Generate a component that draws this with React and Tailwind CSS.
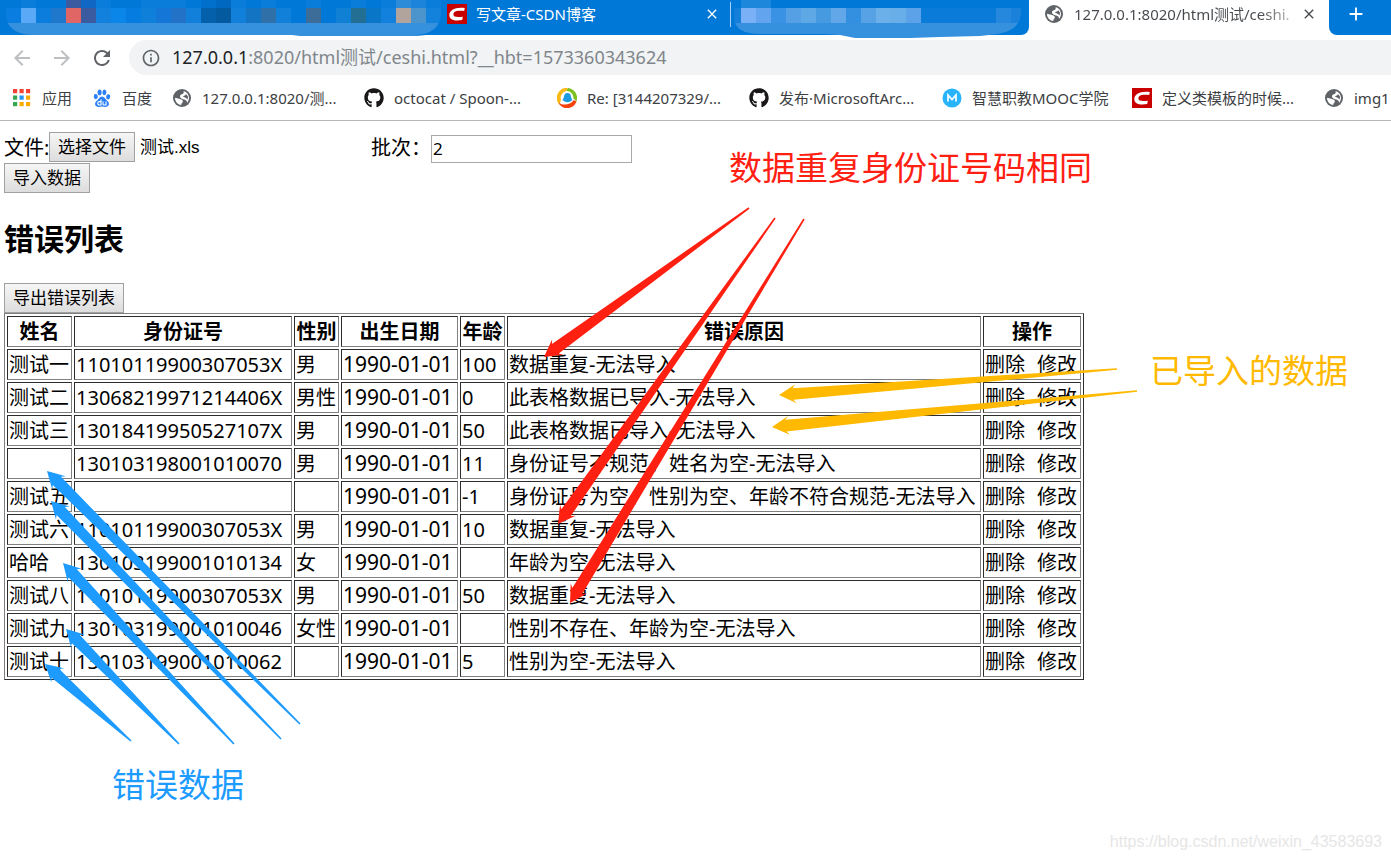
import { useState } from "react";
import { FaGithub } from "react-icons/fa";
import { MdAdd, MdArrowBack, MdArrowForward, MdClose, MdInfoOutline, MdRefresh } from "react-icons/md";

const rows = [
  { name: "测试一", id: "11010119900307053X", sex: "男", birth: "1990-01-01", age: "100", reason: "数据重复-无法导入" },
  { name: "测试二", id: "13068219971214406X", sex: "男性", birth: "1990-01-01", age: "0", reason: "此表格数据已导入-无法导入" },
  { name: "测试三", id: "13018419950527107X", sex: "男", birth: "1990-01-01", age: "50", reason: "此表格数据已导入-无法导入" },
  { name: "", id: "130103198001010070", sex: "男", birth: "1990-01-01", age: "11", reason: "身份证号不规范、姓名为空-无法导入" },
  { name: "测试五", id: "", sex: "", birth: "1990-01-01", age: "-1", reason: "身份证号为空、性别为空、年龄不符合规范-无法导入" },
  { name: "测试六", id: "11010119900307053X", sex: "男", birth: "1990-01-01", age: "10", reason: "数据重复-无法导入" },
  { name: "哈哈", id: "130103199001010134", sex: "女", birth: "1990-01-01", age: "", reason: "年龄为空-无法导入" },
  { name: "测试八", id: "11010119900307053X", sex: "男", birth: "1990-01-01", age: "50", reason: "数据重复-无法导入" },
  { name: "测试九", id: "130103199001010046", sex: "女性", birth: "1990-01-01", age: "", reason: "性别不存在、年龄为空-无法导入" },
  { name: "测试十", id: "130103199001010062", sex: "", birth: "1990-01-01", age: "5", reason: "性别为空-无法导入" },
];

const headers = ["姓名", "身份证号", "性别", "出生日期", "年龄", "错误原因", "操作"];

const leftTiles = [
  "#0a7de0", "#5aa9f7", "#0a7ddd", "#1f78cc", "#e06666", "#3a5ba0", "#1280dd", "#0a86e8", "#057ce0", "#0f80da",
  "#1477d8", "#2272c8", "#1080da", "#0560ac", "#045a9e", "#1080da", "#1474c4", "#3070a8", "#1080d8", "#0078d7",
  "#3c6c98", "#0078d7", "#1080d5", "#236f94", "#0a76c8", "#1280dd", "#b0a49c", "#4c94cc", "#1282dd",
];

const leftTopTiles = [
  "#0078d7", "#0a7cd9", "#0078d7", "#0078d7", "#3a5ba0", "#1068c4", "#0a7cd9", "#0078d7", "#0078d7", "#0a7cd9",
  "#0a7cd9", "#0a7cd9", "#0078d7", "#0070cc", "#0068c0", "#0a7cd9", "#0078d7", "#0a7cd9", "#0078d7", "#0078d7",
  "#0a7cd9", "#0078d7", "#0078d7", "#0a7cd9", "#0078d7", "#0a7cd9", "#2c8cd8", "#1c84da", "#0a7cd9",
];

const rightTiles = [
  "#7ab0f5", "#62a4ee", "#3a92e4", "#55a0e4", "#5ea8e6", "#469be0", "#62a8e8", "#338fe0", "#56a2e4", "#6cb0ea",
  "#68aee8", "#5ba2e8", "#0a7bd8", "#0a7bd8", "#0a7bd8", "#0a7bd8", "#0a7bd8", "#2588dc", "#1a82da",
];

function CsdnIcon() {
  return (
    <svg viewBox="0 0 20 20" className="size-5 shrink-0" aria-hidden="true">
      <rect width="20" height="20" fill="#c90000" />
      <path d="M17.8 4 17.2 7C14.6 6.5 11.8 6.6 9.6 7.1 7.6 7.6 6.4 9 6.4 10.5 6.5 12.9 9.6 13.4 15.8 12.7L15.2 16C8 17.2 2.4 16 2.3 11.2 2.2 6 8.4 2.8 17.8 4Z" fill="#fff" />
    </svg>
  );
}

function AppsIcon() {
  const colors = ["#f44336", "#f44336", "#f44336", "#34a853", "#2196f3", "#f9ab00", "#34a853", "#f9ab00", "#f9ab00"];
  return (
    <svg viewBox="0 0 20 20" className="size-5 shrink-0" aria-hidden="true">
      {colors.map((color, i) => (
        <rect key={i} x={1 + (i % 3) * 6.5} y={1 + Math.floor(i / 3) * 6.5} width="4.2" height="4.2" fill={color} />
      ))}
    </svg>
  );
}

function BaiduIcon() {
  return (
    <svg viewBox="0 0 20 20" className="size-5 shrink-0" aria-hidden="true">
      <g fill="#2b80f7">
        <ellipse cx="3.8" cy="8.6" rx="2" ry="2.6" transform="rotate(-8 3.8 8.6)" />
        <ellipse cx="7.6" cy="4.4" rx="2" ry="2.8" />
        <ellipse cx="12.4" cy="4.4" rx="2" ry="2.8" transform="rotate(10 12.4 4.4)" />
        <ellipse cx="16.2" cy="8.8" rx="2" ry="2.6" transform="rotate(8 16.2 8.8)" />
        <path d="M10 8.6C12.4 8.6 13 11 14.6 12.3 16.4 13.7 17.2 15 16.8 16.8 16.2 19 14 19.2 10 18.6 6 19.2 3.8 19 3.2 16.8 2.8 15 3.6 13.7 5.4 12.3 7 11 7.6 8.6 10 8.6Z" />
      </g>
      <path d="M9 11.6V17H7.4A1.5 1.5 0 0 1 7.4 13.6H9M11 13.6V16Q11 17 12 17H14V13.6" fill="none" stroke="#fff" strokeWidth="1.1" />
    </svg>
  );
}

function MailIcon() {
  return (
    <svg viewBox="0 0 20 20" className="size-5 shrink-0" aria-hidden="true">
      <path d="M11 0A10 10 0 0 1 19.6 13L16.3 10.5A6.5 6.5 0 0 0 9 3Z" fill="#7cc01e" />
      <path d="M2.4 16.6A10 10 0 0 1 11 0L8.6 3.2A7 7 0 0 0 4 12Z" fill="#fbb918" />
      <path d="M19.6 13A10 10 0 0 1 2.4 16.6L2 14.4C6 18 13 17 16.6 12.2Z" fill="#f4420c" />
      <path d="M10.5 5C8 5 7 6.8 7 9L5.6 12C5.6 13 6.2 13 6.8 12.6 7.4 14.8 13.6 14.8 14.2 12.6 14.8 13 15.4 13 15.2 12L14 9C14 6.8 13 5 10.5 5Z" fill="#1d9be0" />
    </svg>
  );
}

function MoocIcon() {
  return (
    <svg viewBox="0 0 20 20" className="size-5 shrink-0" aria-hidden="true">
      <circle cx="10" cy="10" r="9.5" fill="#27b4fb" />
      <path d="M6 13.5V7L10 11.5 14 7V13.5" fill="none" stroke="#fff" strokeWidth="1.7" />
    </svg>
  );
}

function Globe() {
  return (
    <svg viewBox="0 0 20 20" className="size-5 shrink-0" aria-hidden="true">
      <circle cx="10" cy="10" r="9" fill="#5f6368" />
      <path d="M11.6 3.2C14.8 3.8 17 6.6 17 10 17 11.9 16.3 13.5 15.1 14.7 14.8 13 14 11.9 12.4 11.5 10.4 11 8 10.4 8 8.4 8 6.7 9.4 6.3 10.6 6 11.6 5.6 11.8 4.4 11.6 3.2Z" fill="#fff" />
      <path d="M3 9.8 7 10.8C9.4 11.3 11 12 10.8 13.6 10.6 15.1 9.3 15.2 9.2 17 5.6 16.6 3 13.6 3 9.8Z" fill="#fff" />
      <path d="M10.6 8.2C12 7.6 13.6 7.6 14.2 6.2L16 8.4 15.6 11.4C14.4 9.8 12.6 9.4 10.6 8.2Z" fill="#5f6368" />
    </svg>
  );
}

function Bookmark({ icon, label, className }) {
  return (
    <a href="#" className={`flex shrink-0 items-center gap-[10px] whitespace-nowrap ${className}`}>
      {icon}
      <span>{label}</span>
    </a>
  );
}

function Tiles({ colors, x, y, height }) {
  return colors.map((color, i) => <rect key={i} x={x + i * 15} y={y} width="15" height={height} fill={color} />);
}

function LeftTabs() {
  return (
    <svg viewBox="0 0 447 37" className="h-[37px] w-[447px] shrink-0" aria-hidden="true">
      <clipPath id="left-tabs">
        <path d="M6 0H441V12Q441 34 415 35H34Q10 35 6 18Z" />
      </clipPath>
      <g clipPath="url(#left-tabs)">
        <Tiles colors={leftTopTiles} x={6} y={0} height={8} />
        <Tiles colors={leftTiles} x={6} y={8} height={15} />
        <rect x="6" y="23" width="435" height="12" fill="#3590de" />
      </g>
      <path d="M292 35H426L418 36H300Z" fill="#3590de" />
    </svg>
  );
}

function RightTabs() {
  return (
    <svg viewBox="0 0 291 38" className="h-[38px] w-[291px] shrink-0" aria-hidden="true">
      <clipPath id="right-tabs">
        <path d="M5 0H291V12Q291 30 268 34L250 36 210 37 180 38H125L110 35 95 34H30Q5 34 4 18Z" />
      </clipPath>
      <path d="M0.5 2V27" stroke="#a9d0f2" />
      <g clipPath="url(#right-tabs)">
        <rect x="11" width="30" height="8" fill="#1d87dc" />
        <rect x="4" y="8" width="7" height="15" fill="#1480da" />
        <Tiles colors={rightTiles} x={11} y={8} height={15} />
        <rect y="23" width="291" height="15" fill="#3590de" />
      </g>
    </svg>
  );
}

function TabStrip() {
  return (
    <div className="flex h-[35px] items-start bg-[#0078d7] text-[15px] leading-7">
      <LeftTabs />
      <div className="flex w-[283px] shrink-0 items-center text-white">
        <CsdnIcon />
        <span className="ml-[9px] grow whitespace-nowrap">写文章-CSDN博客</span>
        <button type="button" aria-label="关闭标签页" className="mr-[10px]">
          <MdClose className="size-4" />
        </button>
      </div>
      <RightTabs />
      <div className="h-[35px] shrink-0 bg-white">
        <div className="h-[35px] w-2 rounded-br-lg bg-[#0078d7]" />
      </div>
      <div className="h-[35px] w-[300px] shrink-0 bg-white text-[#45494d]">
        <div className="flex items-center pl-[15px]">
          <Globe />
          <span className="ml-[10px] w-[218px] bg-linear-to-r from-[#45494d] from-85% to-[#c8c8c8] bg-clip-text whitespace-nowrap text-transparent">
            127.0.0.1:8020/html测试/ceshi.
          </span>
          <button type="button" aria-label="关闭标签页" className="ml-[9px]">
            <MdClose className="size-4" />
          </button>
        </div>
      </div>
      <div className="h-[35px] grow bg-white">
        <div className="h-[35px] rounded-bl-lg bg-[#0078d7] pl-4 text-white">
          <button type="button" aria-label="新标签页" className="flex h-7 items-center">
            <MdAdd className="size-[22px]" />
          </button>
        </div>
      </div>
    </div>
  );
}

function Toolbar() {
  return (
    <div className="flex h-[45px] items-center text-[#5f6368]">
      <div className="flex w-[129px] shrink-0 items-center gap-4 pl-[10px]">
        <button type="button" aria-label="后退" className="text-[#bdbfc1]"><MdArrowBack className="size-6" /></button>
        <button type="button" aria-label="前进" className="text-[#bdbfc1]"><MdArrowForward className="size-6" /></button>
        <button type="button" aria-label="重新加载"><MdRefresh className="size-6" /></button>
      </div>
      <div className="flex h-[35px] grow items-center rounded-l-full bg-[#f1f3f4] pl-3 text-[18px] leading-[35px]">
        <MdInfoOutline className="size-5 shrink-0" />
        <span className="ml-[11px] whitespace-nowrap text-[#80868b]">
          <span className="text-[#202124]">127.0.0.1</span>:8020/html测试/ceshi.html?__hbt=1573360343624
        </span>
      </div>
    </div>
  );
}

function Bookmarks() {
  return (
    <nav className="flex h-[41px] items-center overflow-hidden border-b border-[#b6b6b6] pb-1 pl-3 text-[15px] leading-5 text-[#3c4043]">
      <Bookmark className="w-20" icon={<AppsIcon />} label="应用" />
      <Bookmark className="w-20" icon={<BaiduIcon />} label="百度" />
      <Bookmark className="w-48" icon={<Globe />} label="127.0.0.1:8020/测..." />
      <Bookmark className="w-[193px]" icon={<FaGithub className="size-5 shrink-0 text-[#191717]" />} label="octocat / Spoon-..." />
      <Bookmark className="w-48" icon={<MailIcon />} label="Re: [3144207329/..." />
      <Bookmark className="w-[193px]" icon={<FaGithub className="size-5 shrink-0 text-[#191717]" />} label="发布·MicrosoftArc..." />
      <Bookmark className="w-[190px]" icon={<MoocIcon />} label="智慧职教MOOC学院" />
      <Bookmark className="w-48" icon={<CsdnIcon />} label="定义类模板的时候..." />
      <Bookmark className="w-20" icon={<Globe />} label="img1" />
    </nav>
  );
}

function PlainButton({ children, ...props }) {
  return (
    <button
      type="button"
      className="block h-[30px] shrink-0 border border-[#a0a0a0] bg-linear-to-b from-[#f6f6f6] to-[#dddddd] px-2 text-[17px] leading-7 whitespace-nowrap"
      {...props}
    >
      {children}
    </button>
  );
}

function ErrorTable() {
  const cell = "border border-t-[#2c2c2c] border-l-[#2c2c2c] border-r-[#808080] border-b-[#808080] p-px h-[31px]";
  return (
    <table className="w-[1080px] table-fixed border-separate border-spacing-[2px] border border-t-[#808080] border-l-[#808080] border-r-[#2c2c2c] border-b-[#2c2c2c] text-left leading-[27px] whitespace-nowrap">
      <colgroup>
        <col className="w-[65px]" />
        <col className="w-[218px]" />
        <col className="w-[45px]" />
        <col className="w-[117px]" />
        <col className="w-[45px]" />
        <col />
        <col className="w-[98px]" />
      </colgroup>
      <thead>
        <tr>
          {headers.map((h) => (
            <th key={h} className={`${cell} text-center font-bold`}>{h}</th>
          ))}
        </tr>
      </thead>
      <tbody>
        {rows.map((row, i) => (
          <tr key={i}>
            <td className={cell}>{row.name}</td>
            <td className={cell}>{row.id}</td>
            <td className={cell}>{row.sex}</td>
            <td className={`${cell} text-[21px]`}>{row.birth}</td>
            <td className={cell}>{row.age}</td>
            <td className={cell}>{row.reason}</td>
            <td className={cell}>
              <div className="flex gap-3">
                <a href="#">删除</a>
                <a href="#">修改</a>
              </div>
            </td>
          </tr>
        ))}
      </tbody>
    </table>
  );
}

// Tapered arrow: thin at the tail, widest just behind the head
function Arrow({ from, to, color }) {
  const [x1, y1] = from;
  const [x2, y2] = to;
  const length = Math.hypot(x1 - x2, y1 - y2);
  const ux = (x1 - x2) / length;
  const uy = (y1 - y2) / length;
  const at = (along, side) => `${x2 + ux * along - uy * side},${y2 + uy * along + ux * side}`;
  const points = [at(0, 0), at(17, 9.5), at(14, 5.8), at(length, 0.8), at(length, -0.8), at(14, -5.8), at(17, -9.5)];
  return <polygon points={points.join(" ")} fill={color} />;
}

function Annotations() {
  return (
    <div className="pointer-events-none absolute inset-0 overflow-hidden text-[33px] leading-10 whitespace-nowrap">
      <svg viewBox="0 0 1391 860" className="absolute top-0 left-0 h-[860px] w-[1391px]" aria-hidden="true">
        <Arrow from={[749, 208]} to={[544, 357]} color="#ff2012" />
        <Arrow from={[775, 218]} to={[558, 524]} color="#ff2012" />
        <Arrow from={[804, 219]} to={[570, 603]} color="#ff2012" />
        <Arrow from={[1117, 369]} to={[779, 395]} color="#ffb900" />
        <Arrow from={[1137, 391]} to={[772, 427]} color="#ffb900" />
        <Arrow from={[300, 724]} to={[47, 471]} color="#1e9bff" />
        <Arrow from={[281, 739]} to={[51, 501]} color="#1e9bff" />
        <Arrow from={[234, 744]} to={[63, 563]} color="#1e9bff" />
        <Arrow from={[179, 744]} to={[66, 629]} color="#1e9bff" />
        <Arrow from={[131, 741]} to={[45, 664]} color="#1e9bff" />
      </svg>
      <span className="absolute top-[148px] left-[729px] text-[#ff2012]">数据重复身份证号码相同</span>
      <span className="absolute top-[351px] left-[1150px] text-[#ffb900]">已导入的数据</span>
      <span className="absolute top-[765px] left-[112px] text-[#1e9bff]">错误数据</span>
      <span className="absolute right-[9px] bottom-2 font-['Liberation_Sans',sans-serif] text-[16px] leading-5 text-[#e6e6e6]">
        https://blog.csdn.net/weixin_43583693
      </span>
    </div>
  );
}

export default function App() {
  const [batch, setBatch] = useState("2");

  return (
    <div className="relative min-h-screen overflow-hidden bg-white font-['Noto_Sans','Noto_Sans_CJK_SC',sans-serif] text-black">
      <TabStrip />
      <Toolbar />
      <Bookmarks />

      <main className="px-1 pt-[11px] text-[20px]">
        <div className="flex h-[31px] items-start leading-8">
          <div className="flex w-[367px] shrink-0">
            <span className="w-[45px] shrink-0 whitespace-nowrap">文件:</span>
            <PlainButton>选择文件</PlainButton>
            <span className="ml-[5px] font-['Liberation_Sans','Noto_Sans_CJK_SC',sans-serif] text-[17px]">测试.xls</span>
          </div>
          <label htmlFor="batch" className="w-[60px] shrink-0">批次：</label>
          <input
            id="batch"
            value={batch}
            onChange={(e) => setBatch(e.target.value)}
            className="mt-[3px] h-7 w-[201px] border border-[#a9a9a9] px-px text-[17px]"
          />
        </div>
        <PlainButton>导入数据</PlainButton>
        <h2 className="mt-[26px] mb-6 text-[30px] leading-10 font-bold">错误列表</h2>
        <PlainButton>导出错误列表</PlainButton>
        <ErrorTable />
      </main>

      <Annotations />
    </div>
  );
}
